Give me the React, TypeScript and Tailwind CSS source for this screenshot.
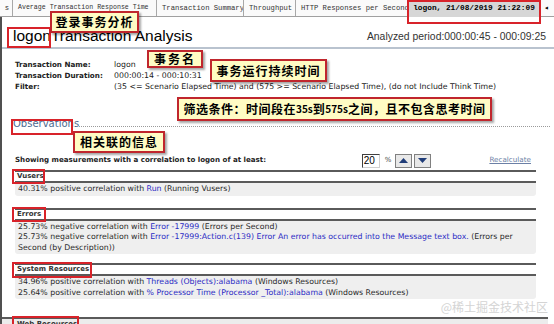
import React from "react";

const Callout = ({ className, children }: { className: string; children: React.ReactNode }) => (
  <div
    className={`absolute flex items-center justify-center whitespace-nowrap border-2 border-[#c0262d] bg-[#fffcc4] shadow-[2px_2px_2px_rgba(0,0,0,0.35)] font-bold text-black leading-none ${className}`}
    style={{ fontFamily: '"Noto Sans CJK SC", sans-serif' }}
  >
    {children}
  </div>
);

const Mark = ({ className }: { className: string }) => (
  <div className={`absolute border-2 border-[#d8232a] ${className}`} />
);

const Section = ({ title, rows, className }: { title: string; rows: React.ReactNode[]; className: string }) => (
  <div className={`ml-[13px] w-[521px] ${className}`}>
    <div className="h-[13px] border-y-2 border-[#5a5a5a] flex items-center pl-[2px] font-bold text-[7px] text-[#333]">
      {title}
    </div>
    <div className="bg-[#efefef] rounded-b-[3px] py-[1px] pl-[3px]">
      {rows.map((r, i) => (
        <div key={i} className="leading-[10.5px] text-[7.8px] text-[#2a2a2a]">
          {r}
        </div>
      ))}
    </div>
  </div>
);

const L = ({ children }: { children: React.ReactNode }) => <span className="text-[#2b2bc4]">{children}</span>;

export default function App() {
  const tabs = [
    { t: "s", w: "w-[13px]", f: "text-[7.2px]" },
    { t: "Average Transaction Response Time", w: "w-[144px]", f: "text-[6.6px]" },
    { t: "Transaction Summary", w: "w-[87px]", f: "text-[7.2px]" },
    { t: "Throughput", w: "w-[52px]", f: "text-[7.2px]" },
    { t: "HTTP Responses per Second", w: "w-[112px]", f: "text-[7.2px]" },
  ];
  return (
    <div
      className="relative w-[554px] h-[324px] overflow-hidden bg-white"
      style={{ fontFamily: '"DejaVu Sans", Verdana, sans-serif' }}
    >
      {/* tab strip */}
      <div
        className="flex h-[17px] items-center border-b border-[#a0a0a0] bg-[#fafafa] text-[#333] whitespace-nowrap"
        style={{ fontFamily: '"Liberation Mono", monospace' }}
      >
        {tabs.map((tab) => (
          <div key={tab.t} className={`${tab.w} ${tab.f} h-full flex items-center justify-end overflow-hidden border-r border-[#a8a8a8] pr-[3px] shrink-0`}>
            <span className={tab.t === "s" ? "" : "w-full pl-[5px]"}>{tab.t}</span>
          </div>
        ))}
        <div className="w-[132px] h-[16px] mt-[1px] shrink-0 flex items-center justify-center bg-[#d6d6d6] border-x border-[#555] font-bold text-[7.8px] text-black">
          logon, 21/08/2019 21:22:09
        </div>
        <div className="ml-[4px] text-[8px] text-black">◂</div>
      </div>

      <div className="border-l-2 border-[#505050] h-[307px]">
        {/* title row */}
        <div className="flex items-end justify-between h-[32px] pb-[4px] pl-[11px] pr-[8px] border-b-2 border-[#b9c3cf]">
          <div className="text-[15.5px] leading-none text-black" style={{ fontFamily: '"Liberation Sans", Arial, sans-serif' }}>
            logonTransaction Analysis
          </div>
          <div className="text-[10.4px] leading-none text-[#333] mb-[1px]" style={{ fontFamily: '"Liberation Sans", Arial, sans-serif' }}>
            Analyzed period:000:00:45 - 000:09:25
          </div>
        </div>

        {/* transaction info */}
        <div className="mt-[10px] ml-[13px] grid grid-cols-[99px_1fr] leading-[11px] text-[7.8px] text-[#222]">
          <div className="font-bold text-[7.2px]">Transaction Name:</div>
          <div>logon</div>
          <div className="font-bold text-[7.2px]">Transaction Duration:</div>
          <div>000:00:14 - 000:10:31</div>
          <div className="font-bold text-[7.2px]">Filter:</div>
          <div>(35 &lt;= Scenario Elapsed Time) and (575 &gt;= Scenario Elapsed Time), (do not Include Think Time)</div>
        </div>

        {/* observations */}
        <div className="mt-[27px] ml-[11px] flex items-end">
          <span className="text-[10px] leading-none text-[#4d6a8f]">Observations</span>
          <div className="flex-1 mb-[2px] mr-[4px] border-b border-dotted border-[#9a9a9a]" />
        </div>

        <div className="mt-[24px] ml-[13px] mr-[23px] flex items-center h-[15px]">
          <span className="font-bold text-[7.1px] text-[#222]">Showing measurements with a correlation to logon of at least:</span>
          <div className="ml-auto flex items-center">
            <div className="w-[18px] h-[14px] border border-t-[#404040] border-l-[#404040] border-b-[#d0d0d0] border-r-[#d0d0d0] bg-white text-[10px] leading-[12px] pl-[1px]" style={{ fontFamily: '"Liberation Sans", Arial, sans-serif' }}>
              20
            </div>
            <span className="ml-[5px] text-[7px] text-[#444]">%</span>
            <div className="ml-[4px] w-[17px] h-[14px] border border-[#808080] bg-[#e8e8e8] flex items-center justify-center">
              <svg width="9" height="5" viewBox="0 0 9 5"><path d="M0 5L4.5 0L9 5Z" fill="#1f3c78" /></svg>
            </div>
            <div className="ml-[2px] w-[17px] h-[14px] border border-[#808080] bg-[#e8e8e8] flex items-center justify-center">
              <svg width="9" height="5" viewBox="0 0 9 5"><path d="M0 0L4.5 5L9 0Z" fill="#1f3c78" /></svg>
            </div>
            <span className="ml-[58px] text-[7.2px] underline text-[#6c80a6]">Recalculate</span>
          </div>
        </div>

        <Section className="mt-[2px]" title="Vusers" rows={[<>40.31% positive correlation with <L>Run</L> (Running Vusers)</>]} />
        <Section
          className="mt-[12px]"
          title="Errors"
          rows={[
            <>25.73% negative correlation with <L>Error -17999</L> (Errors per Second)</>,
            <>
              25.73% negative correlation with <L>Error -17999:Action.c(139) Error An error has occurred into the Message text box.</L> (Errors per
              <br />
              Second (by Description))
            </>,
          ]}
        />
        <Section
          className="mt-[9px]"
          title="System Resources"
          rows={[
            <>34.96% positive correlation with <L>Threads (Objects):alabama</L> (Windows Resources)</>,
            <>25.64% positive correlation with <L>% Processor Time (Processor _Total):alabama</L> (Windows Resources)</>,
          ]}
        />
        <div className="mt-[18px] mr-[6px] h-[12px] border-t-2 border-[#5a5a5a] bg-[#ececec] pl-[15px] pt-[1px] font-bold text-[7px] leading-[9px] text-[#333]">
          Web Resources
        </div>
      </div>

      <div className="absolute right-[6px] bottom-[8px] text-[12px] text-[#d4d4d4]" style={{ fontFamily: '"Noto Sans CJK SC", sans-serif' }}>
        @稀土掘金技术社区
      </div>

      {/* annotations */}
      <Mark className="left-[407px] top-0 w-[134px] h-[24px]" />
      <Mark className="left-[7px] top-[27px] w-[44px] h-[21px]" />
      <Mark className="left-[11px] top-[119px] w-[62px] h-[16px]" />
      <Mark className="left-[12px] top-[169px] w-[33px] h-[15px]" />
      <Mark className="left-[12px] top-[207px] w-[34px] h-[15px]" />
      <Mark className="left-[12px] top-[262px] w-[80px] h-[16px]" />
      <Mark className="left-[12px] top-[316px] w-[67px] h-[14px]" />

      <Callout className="left-[50px] top-[11px] w-[89px] h-[22px] text-[12px] tracking-[1px]">登录事务分析</Callout>
      <Callout className="left-[147px] top-[50px] w-[56px] h-[18px] text-[12px] tracking-[2px]">事务名</Callout>
      <Callout className="left-[210px] top-[59px] w-[117px] h-[23px] text-[12px] tracking-[1px]">事务运行持续时间</Callout>
      <Callout className="left-[177px] top-[97px] w-[315px] h-[24px] text-[12px] tracking-[0.5px]">
        筛选条件：时间段在<span className="text-[10px] tracking-normal">35s</span>到<span className="text-[10px] tracking-normal">575s</span>之间，且不包含思考时间
      </Callout>
      <Callout className="left-[73px] top-[131px] w-[92px] h-[22px] text-[12px] tracking-[1px]">相关联的信息</Callout>
    </div>
  );
}
